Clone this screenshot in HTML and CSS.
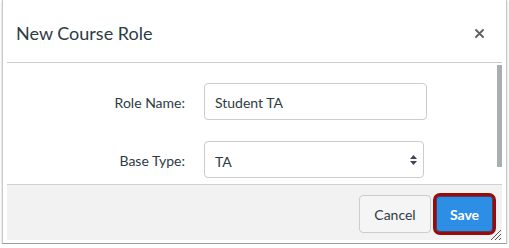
FILE: index.html
```html
<!doctype html>
<html>
  <head>
    <meta charset="utf-8" />
    <title>New Course Role</title>
    <link rel="stylesheet" href="styles.css">
  </head>
  <body>
    <div class="window">
      <div class="dialog">
        <div class="header">
          <h1>New Course Role</h1>
          <svg class="close" width="9" height="9" viewBox="0 0 9 9">
            <path d="M1 1 L8 8 M8 1 L1 8" stroke="#5a5f63" stroke-width="1.8" stroke-linecap="round"/>
          </svg>
        </div>
        <div class="content">
          <div class="form">
            <div class="row">
              <label class="label">Role Name:</label>
              <div class="field field-text">Student TA</div>
            </div>
            <div class="row">
              <label class="label">Base Type:</label>
              <div class="field field-select">TA
                <svg class="arrows" width="7" height="10" viewBox="0 0 7 10">
                  <path d="M3.5 0 L7 4 L0 4 Z M0 6 L7 6 L3.5 10 Z" fill="#3c4650"/>
                </svg>
              </div>
            </div>
          </div>
          <div class="scrollbar"></div>
        </div>
        <div class="footer">
          <button class="btn btn-cancel">Cancel</button>
          <button class="btn btn-save">Save</button>
          <svg class="grip" width="11" height="11" viewBox="0 0 11 11">
            <path d="M11 1 L1 11 M11 5 L5 11 M11 9 L9 11" stroke="#555" stroke-width="1"/>
          </svg>
        </div>
      </div>
    </div>
  </body>
</html>
```

FILE: styles.css
```css
* { margin: 0; padding: 0; box-sizing: border-box; }
body { margin: 0; background: #fff; color: #2d3b45; font-family: Lato, "Open Sans", sans-serif; }
.window {
  margin-left: 2px;
  width: 505px;
  height: 244px;
  border: 1px solid #c9c9c9;
  border-top: none;
  border-bottom-color: #9a9a9a;
  padding: 0 4px 3px 4px;
  box-shadow: 0 1px 2px rgba(0,0,0,0.25);
  background: #fff;
}
.dialog { width: 495px; }
.header {
  height: 63px;
  border-bottom: 1px solid #c7cdd1;
  display: flex;
  align-items: center;
  justify-content: space-between;
  padding: 0 18px 0 9px;
}
h1 { font-size: 18px; font-weight: normal; margin-top: 4px; }
.close { margin-top: 4px; }
.content { height: 121px; display: flex; overflow: hidden; }
.form { flex: 1; padding-top: 20px; display: flex; flex-direction: column; gap: 21px; }
.row { display: flex; align-items: center; height: 37px; }
.label { width: 178px; text-align: right; font-size: 14px; padding-top: 1px; margin-right: 19px; }
.field {
  height: 37px;
  border: 1px solid #c7cdd1;
  border-radius: 4px;
  font-size: 14px;
  display: flex;
  align-items: center;
  padding-left: 10px;
  padding-top: 1px;
}
.field-text { width: 223px; }
.field-select { width: 220px; justify-content: space-between; padding-right: 6px; padding-top: 3px; }
.arrows { margin-top: -2px; }
.scrollbar { width: 5px; height: 102px; margin-top: 2px; background: #a9aeb2; }
.footer {
  position: relative;
  height: 56px;
  border-top: 1px solid #cfd2d4;
  background: #f2f2f2;
  display: flex;
  align-items: center;
  justify-content: flex-end;
  gap: 2px;
  padding-right: 6px;
  padding-top: 3px;
}
.btn { font-family: Lato, "Open Sans", sans-serif; font-size: 14px; cursor: pointer; }
.btn-cancel {
  width: 72px;
  height: 38px;
  border: 1px solid #c7cdd1;
  border-radius: 4px;
  background: #f5f5f5;
  color: #2d3b45;
}
.btn-save {
  width: 63px;
  height: 42px;
  border: 3px solid #960b0b;
  border-radius: 7px;
  background: #2d8ee6;
  color: #fff;
  font-weight: bold;
  box-shadow: inset 0 0 0 1px #5a3a5a;
}
.grip { position: absolute; right: 1px; bottom: 0; }
```
